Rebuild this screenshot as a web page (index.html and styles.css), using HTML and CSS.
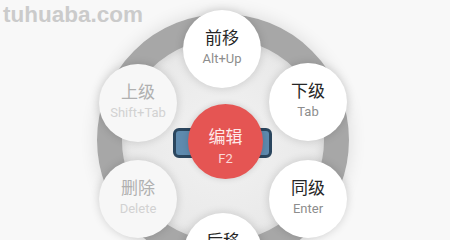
FILE: index.html
```html
<!DOCTYPE html>
<html lang="zh">
<head>
<meta charset="utf-8">
<link rel="stylesheet" href="styles.css">
</head>
<body>
<div class="stage">
  <div class="watermark">tuhuaba.com</div>
  <div class="ring"></div>
  <div class="bar"></div>
  <div class="node node-up"><span class="cn">前移</span><span class="key">Alt+Up</span></div>
  <div class="node node-child"><span class="cn">下级</span><span class="key">Tab</span></div>
  <div class="node node-sibling"><span class="cn">同级</span><span class="key">Enter</span></div>
  <div class="node node-down"><span class="cn">后移</span><span class="key">Alt+Down</span></div>
  <div class="node node-del disabled"><span class="cn">删除</span><span class="key">Delete</span></div>
  <div class="node node-parent disabled"><span class="cn">上级</span><span class="key">Shift+Tab</span></div>
  <div class="node node-edit"><span class="cn">编辑</span><span class="key">F2</span></div>
</div>
</body>
</html>
```
FILE: styles.css
```css
html, body {
  margin: 0;
  padding: 0;
  background: #f8f8f8;
}
.stage {
  position: relative;
  width: 450px;
  height: 240px;
  overflow: hidden;
  font-family: Roboto, "Noto Sans CJK SC", sans-serif;
}
.watermark {
  position: absolute;
  left: 3px;
  top: 4px;
  font-family: "Liberation Sans", Arial, sans-serif;
  font-weight: bold;
  font-size: 22.5px;
  line-height: 22px;
  color: #cbcbcb;
}
.ring {
  position: absolute;
  left: 97px;
  top: 14px;
  width: 202px;
  height: 202px;
  border: 25px solid #a7a7a7;
  border-radius: 50%;
  background: radial-gradient(circle, #f2f2f2 0%, #eaeaea 60%, #dddddd 100%);
  box-shadow: 0 0 18px rgba(0,0,0,0.12), inset 0 0 10px rgba(0,0,0,0.12);
}
.bar {
  position: absolute;
  left: 173px;
  top: 128px;
  width: 93px;
  height: 24px;
  border: 3px solid #2b465e;
  border-radius: 6px;
  background: #5e8aae;
}
.node {
  position: absolute;
  width: 78px;
  height: 78px;
  margin: -39px 0 0 -39px;
  border-radius: 50%;
  background: #fff;
  box-shadow: 0 0 10px rgba(0,0,0,0.16);
  display: flex;
  flex-direction: column;
  align-items: center;
  justify-content: center;
  gap: 4px;
  padding-bottom: 4px;
  box-sizing: border-box;
}
.cn {
  font-family: "Noto Sans CJK SC", sans-serif;
  font-size: 17px;
  line-height: 20px;
  color: #262626;
}
.key {
  font-size: 13px;
  line-height: 16px;
  color: #8d8d8d;
}
.disabled {
  background: #f7f7f7;
}
.disabled .cn { color: #b0b0b0; }
.disabled .key { color: #d2d2d2; }
.node-up { left: 222px; top: 49px; }
.node-child { left: 308px; top: 102px; }
.node-sibling { left: 308px; top: 199px; }
.node-down { left: 223px; top: 252px; }
.node-del { left: 138px; top: 199px; }
.node-parent { left: 138px; top: 103px; }
.node-edit {
  left: 225px;
  top: 141px;
  width: 75px;
  height: 75px;
  margin: -37px 0 0 -37px;
  padding: 10px 0 0;
  gap: 5px;
  background: #e55553;
  box-shadow: 0 0 6px rgba(0,0,0,0.15);
}
.node-edit .cn { color: #fde9e9; }
.node-edit .key { color: #fbd8d8; }
```
